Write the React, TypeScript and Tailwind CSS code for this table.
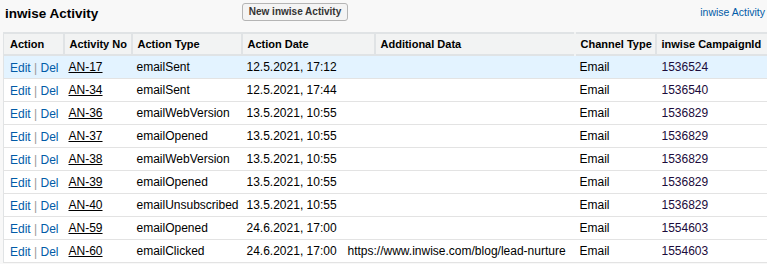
import React from 'react';

interface Activity {
  no: string;
  type: string;
  date: string;
  extra?: string;
  channel: string;
  campaignId: string;
}

const activities: Activity[] = [
  { no: 'AN-17', type: 'emailSent', date: '12.5.2021, 17:12', channel: 'Email', campaignId: '1536524' },
  { no: 'AN-34', type: 'emailSent', date: '12.5.2021, 17:44', channel: 'Email', campaignId: '1536540' },
  { no: 'AN-36', type: 'emailWebVersion', date: '13.5.2021, 10:55', channel: 'Email', campaignId: '1536829' },
  { no: 'AN-37', type: 'emailOpened', date: '13.5.2021, 10:55', channel: 'Email', campaignId: '1536829' },
  { no: 'AN-38', type: 'emailWebVersion', date: '13.5.2021, 10:55', channel: 'Email', campaignId: '1536829' },
  { no: 'AN-39', type: 'emailOpened', date: '13.5.2021, 10:55', channel: 'Email', campaignId: '1536829' },
  { no: 'AN-40', type: 'emailUnsubscribed', date: '13.5.2021, 10:55', channel: 'Email', campaignId: '1536829' },
  { no: 'AN-59', type: 'emailOpened', date: '24.6.2021, 17:00', channel: 'Email', campaignId: '1554603' },
  {
    no: 'AN-60',
    type: 'emailClicked',
    date: '24.6.2021, 17:00',
    extra: 'https://www.inwise.com/blog/lead-nurture',
    channel: 'Email',
    campaignId: '1554603',
  },
];

const headers = [
  'Action',
  'Activity No',
  'Action Type',
  'Action Date',
  'Additional Data',
  'Channel Type',
  'inwise CampaignId',
];

export default function App() {
  return (
    <div
      className="w-[767px] h-[264px] overflow-hidden bg-[#f8f8f8] text-black"
      style={{ fontFamily: '"Liberation Sans", Arial, sans-serif' }}
    >
      {/* title bar */}
      <div className="h-[32px] flex items-start pt-[3px]">
        <h2 className="w-[242px] pl-[5px] pt-[2px] text-[13.5px] font-bold leading-[18px]">
          inwise Activity
        </h2>
        <button className="h-[18px] w-[106px] rounded-[3px] border border-[#b5b5b5] bg-[#f4f4f4] text-[10px] font-bold leading-[16px] text-[#333]">
          New inwise Activity
        </button>
        <div className="flex-1 text-right pr-[2px] pt-[2px] text-[10.5px] leading-[14px]">
          <a className="text-[#015ba7]">inwise Activity</a>
        </div>
      </div>

      {/* related list */}
      <div className="pl-[3px]">
        <table className="w-[764px] table-fixed border-collapse border-l border-[#e0e3e5] text-[12px]">
          <colgroup>
            <col className="w-[60px]" />
            <col className="w-[68px]" />
            <col className="w-[110px]" />
            <col className="w-[133px]" />
            <col className="w-[200px]" />
            <col className="w-[81px]" />
            <col className="w-[112px]" />
          </colgroup>
          <thead>
            <tr className="h-[22px] bg-[#f2f3f3] border-t-2 border-b-2 border-[#e0e3e5]">
              {headers.map((h, i) => (
                <th
                  key={h}
                  className={`text-left text-[11px] font-bold whitespace-nowrap ${
                    i === 0 ? 'pl-[6px]' : 'pl-[5px] border-l-2 border-[#e0e3e5]'
                  } ${i === 5 ? 'border-l-[#f2f3f3]' : ''}`}
                >
                  {h}
                </th>
              ))}
            </tr>
          </thead>
          <tbody>
            {activities.map((a, idx) => (
              <tr
                key={a.no}
                className={`h-[23px] border-b border-[#e3e3e3] ${
                  idx === 0 ? 'bg-[#e3f3ff]' : 'bg-white'
                }`}
              >
                <td className="pl-[6px] whitespace-nowrap pt-[2px]">
                  <a className="text-[#015ba7]">Edit</a>
                  <span className="text-[#999]"> | </span>
                  <a className="text-[#015ba7]">Del</a>
                </td>
                <td className="pl-[5px]">
                  <a className="underline text-black">{a.no}</a>
                </td>
                <td className="pl-[5px] whitespace-nowrap">{a.type}</td>
                <td className="pl-[5px] whitespace-nowrap">{a.date}</td>
                <td className="pl-[5px] whitespace-nowrap overflow-visible">
                  {a.extra && <div className="ml-[-32px]">{a.extra}</div>}
                </td>
                <td className="pl-[5px]">{a.channel}</td>
                <td className="pl-[6px] text-[#1b0b3b]">{a.campaignId}</td>
              </tr>
            ))}
          </tbody>
        </table>
      </div>
    </div>
  );
}
